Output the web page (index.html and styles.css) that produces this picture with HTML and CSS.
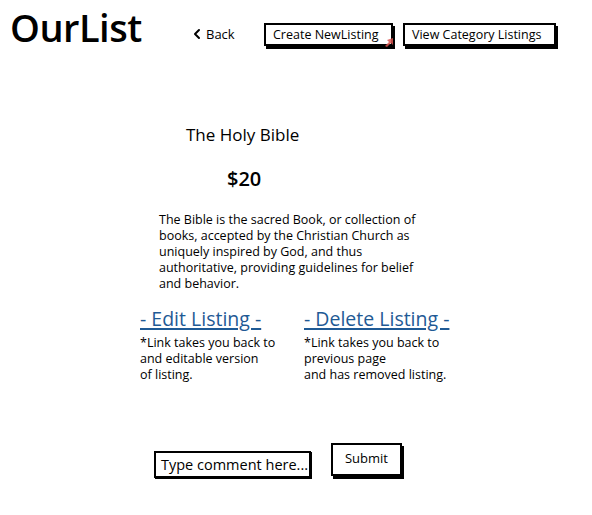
FILE: index.html
```html
<!DOCTYPE html>
<html>
<head>
<meta charset="utf-8">
<link rel="stylesheet" href="styles.css">
</head>
<body>
<header class="topbar">
  <div class="logo">OurList</div>
  <a class="back" href="#"><svg class="chev" width="10" height="12" viewBox="0 0 10 12"><path d="M7 2 L3 6 L7 10" fill="none" stroke="#000" stroke-width="2" stroke-linecap="round" stroke-linejoin="round"/></svg>Back</a>
  <div class="btn create">Create NewListing
    <svg class="cursor" width="10" height="11" viewBox="0 0 10 11"><path d="M1 10 L5 6 L3 4 L9 2 L9 9 L7 7 L3 11 Z" fill="#d9534f" opacity="0.85"/></svg>
  </div>
  <div class="btn view">View Category Listings</div>
</header>
<main class="listing">
  <h1 class="title">The Holy Bible</h1>
  <div class="price">$20</div>
  <p class="desc">The Bible is the sacred Book, or collection of<br>books, accepted by the Christian Church as<br>uniquely inspired by God, and thus<br>authoritative, providing guidelines for belief<br>and behavior.</p>
  <div class="actions">
    <div class="action edit">
      <a href="#" class="link">- Edit Listing -</a>
      <p class="note">*Link takes you back to<br>and editable version<br>of listing.</p>
    </div>
    <div class="action del">
      <a href="#" class="link">- Delete Listing -</a>
      <p class="note">*Link takes you back to<br>previous page<br>and has removed listing.</p>
    </div>
  </div>
  <div class="comment">
    <div class="input">Type comment here...</div>
    <div class="submit">Submit</div>
  </div>
</main>
</body>
</html>
```

FILE: styles.css
```css
* { box-sizing: border-box; }
body {
  margin: 0;
  width: 592px;
  height: 515px;
  background: #fff;
  color: #000;
  font-family: "Open Sans", "Liberation Sans", sans-serif;
}
.topbar {
  display: flex;
  align-items: flex-start;
  padding: 5px 0 0 10px;
  height: 60px;
}
.logo {
  font-size: 38px;
  font-weight: 600;
  line-height: 44px;
  letter-spacing: -0.5px;
  width: 182px;
}
.back {
  display: flex;
  align-items: center;
  gap: 4px;
  margin-top: 20px;
  font-size: 13px;
  color: #000;
  text-decoration: none;
  width: 72px;
}
.chev { display: block; }
.btn {
  position: relative;
  margin-top: 18px;
  height: 23px;
  border: 2px solid #000;
  box-shadow: 2px 3px 0 #000;
  font-size: 12.5px;
  font-weight: 500;
  line-height: 19px;
  padding: 0 7px;
  white-space: nowrap;
}
.create { width: 129px; margin-right: 10px; }
.view { width: 153px; }
.cursor { position: absolute; right: -3px; bottom: -3px; }
.listing {
  display: flex;
  flex-direction: column;
  padding-left: 140px;
}
.title {
  margin: 64px 0 0 46px;
  font-size: 17px;
  font-weight: 500;
  line-height: 22px;
}
.price {
  margin: 20px 0 0 87px;
  font-size: 20px;
  font-weight: 600;
  line-height: 26px;
}
.desc {
  margin: 20px 0 0 19px;
  font-size: 12.5px;
  font-weight: 500;
  line-height: 16px;
}
.actions {
  display: flex;
  margin-top: 14px;
}
.action { width: 164px; }
.link {
  display: inline-block;
  font-size: 19.5px;
  line-height: 26px;
  color: #1f5a95;
  text-decoration: underline;
  text-decoration-thickness: 2px;
  text-underline-offset: 2px;
}
.note {
  margin: 3px 0 0;
  font-size: 12.5px;
  font-weight: 500;
  line-height: 16px;
}
.comment {
  display: flex;
  align-items: flex-start;
  margin: 60px 0 0 14px;
}
.input {
  margin-top: 8px;
  width: 157px;
  height: 27px;
  border: 2px solid #000;
  box-shadow: 1px 1px 0 #000;
  font-size: 14.5px;
  font-weight: 500;
  line-height: 23px;
  padding-left: 5px;
  white-space: nowrap;
}
.submit {
  margin-left: 20px;
  width: 71px;
  height: 33px;
  border: 2px solid #000;
  box-shadow: 2px 3px 0 #000;
  font-size: 13px;
  font-weight: 500;
  line-height: 27px;
  text-align: center;
}
```
